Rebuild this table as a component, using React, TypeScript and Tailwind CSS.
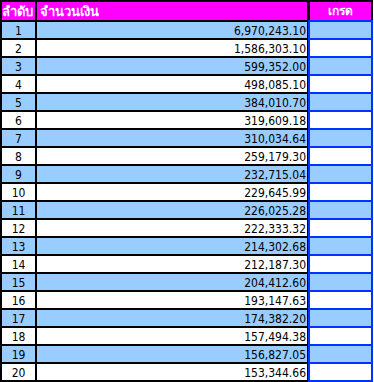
const amounts = [
  "6,970,243.10",
  "1,586,303.10",
  "599,352.00",
  "498,085.10",
  "384,010.70",
  "319,609.18",
  "310,034.64",
  "259,179.30",
  "232,715.04",
  "229,645.99",
  "226,025.28",
  "222,333.32",
  "214,302.68",
  "212,187.30",
  "204,412.60",
  "193,147.63",
  "174,382.20",
  "157,494.38",
  "156,827.05",
  "153,344.66",
];

const font = "font-['Tahoma','DejaVu_Sans_Condensed','DejaVu_Sans',sans-serif]";

export default function App() {
  return (
    <div className={`flex w-[374px] bg-white text-[12px] leading-none text-black ${font}`}>
      {/* order + amount columns, black grid */}
      <div className="grid w-[308px] grid-cols-[33px_270px] gap-[2px] bg-black pt-[2px] pr-[1px] pb-[2px] pl-[2px]">
        <div className="flex h-[18px] items-center bg-[#ff00ff] text-[13px] font-bold text-white">ลำดับ</div>
        <div className="flex h-[18px] items-center bg-[#ff00ff] pl-[3px] text-[13px] font-bold text-white">จำนวนเงิน</div>
        {amounts.map((amt, i) => {
          const bg = i % 2 === 0 ? "bg-[#99ccff]" : "bg-white";
          return [
            <div key={`n${i}`} className={`flex h-[16px] items-center justify-center pt-[1px] ${bg}`}>
              {i + 1}
            </div>,
            <div key={`a${i}`} className={`flex h-[16px] items-center justify-end pt-[1px] pr-[1px] ${bg}`}>
              {amt}
            </div>,
          ];
        })}
      </div>

      {/* grade column, blue grid */}
      <div className="flex w-[65px] flex-col">
        <div className="flex h-[20px] items-center justify-center border-x-2 border-t-2 border-black bg-[#ff00ff] text-[12px] font-bold text-white">
          เกรด
        </div>
        <div className="flex flex-col gap-[2px] bg-[#0033ff] p-[2px]">
          {amounts.map((_, i) => (
            <div key={i} className={`h-[16px] ${i % 2 === 0 ? "bg-[#99ccff]" : "bg-white"}`} />
          ))}
        </div>
      </div>
    </div>
  );
}
